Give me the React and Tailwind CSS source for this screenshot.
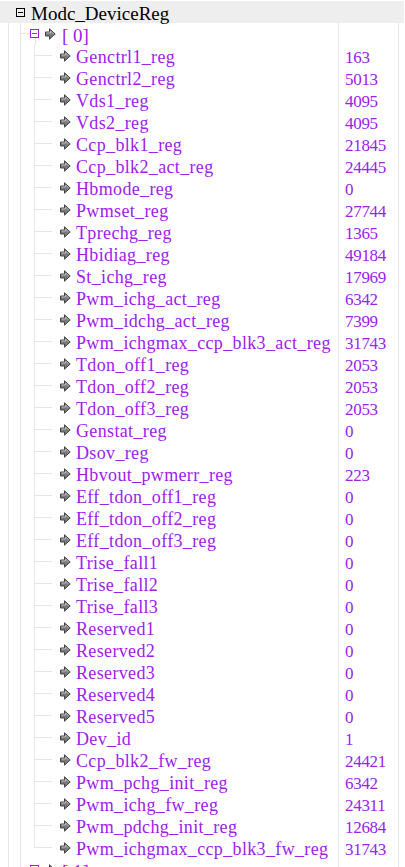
const rows = [
  ["Genctrl1_reg", "163"],
  ["Genctrl2_reg", "5013"],
  ["Vds1_reg", "4095"],
  ["Vds2_reg", "4095"],
  ["Ccp_blk1_reg", "21845"],
  ["Ccp_blk2_act_reg", "24445"],
  ["Hbmode_reg", "0"],
  ["Pwmset_reg", "27744"],
  ["Tprechg_reg", "1365"],
  ["Hbidiag_reg", "49184"],
  ["St_ichg_reg", "17969"],
  ["Pwm_ichg_act_reg", "6342"],
  ["Pwm_idchg_act_reg", "7399"],
  ["Pwm_ichgmax_ccp_blk3_act_reg", "31743"],
  ["Tdon_off1_reg", "2053"],
  ["Tdon_off2_reg", "2053"],
  ["Tdon_off3_reg", "2053"],
  ["Genstat_reg", "0"],
  ["Dsov_reg", "0"],
  ["Hbvout_pwmerr_reg", "223"],
  ["Eff_tdon_off1_reg", "0"],
  ["Eff_tdon_off2_reg", "0"],
  ["Eff_tdon_off3_reg", "0"],
  ["Trise_fall1", "0"],
  ["Trise_fall2", "0"],
  ["Trise_fall3", "0"],
  ["Reserved1", "0"],
  ["Reserved2", "0"],
  ["Reserved3", "0"],
  ["Reserved4", "0"],
  ["Reserved5", "0"],
  ["Dev_id", "1"],
  ["Ccp_blk2_fw_reg", "24421"],
  ["Pwm_pchg_init_reg", "6342"],
  ["Pwm_ichg_fw_reg", "24311"],
  ["Pwm_pdchg_init_reg", "12684"],
  ["Pwm_ichgmax_ccp_blk3_fw_reg", "31743"],
];

function Arrow() {
  return (
    <svg width="11" height="12" viewBox="0 0 11 12" className="shrink-0">
      <path d="M0.5 4 H4.5 V0.8 L10.2 6 L4.5 11.2 V8 H0.5 Z" fill="#7a7a7a" stroke="#444" strokeWidth="1" strokeLinejoin="miter" />
      <path d="M1.5 5 H5.5 V3 L8.5 6" fill="none" stroke="#bbb" strokeWidth="1" />
    </svg>
  );
}

function MinusBox({ color }) {
  return (
    <div className="w-[9px] h-[9px] border flex items-center justify-center shrink-0" style={{ borderColor: color }}>
      <div className="w-[5px] h-px" style={{ background: color }} />
    </div>
  );
}

const line = "border-l border-[#e6e6e6]";

function ValueCell({ children }) {
  return (
    <div className={`w-[60px] h-full ${line} pl-[6px] pt-[2px] flex items-center text-[17px] tracking-[-0.3px] text-[#a020f0]`}>
      {children}
    </div>
  );
}

function ChildRow({ name, value, last }) {
  return (
    <div className="flex h-[22px] items-stretch">
      <div className="w-[338px] flex items-stretch">
        <div className="w-[8px]" />
        <div className={`w-[12px] ${line}`} />
        <div className={`w-[14px] ${line}`} />
        <div className="w-[18px] flex flex-col">
          <div className={`h-[11px] ${line} border-b border-b-[#e6e6e6]`} />
          <div className={`flex-1 ${last ? "" : line}`} />
        </div>
        <div className="ml-[8px] flex items-center">
          <Arrow />
        </div>
        <div className="ml-[5px] pt-[2px] flex items-center text-[18px] tracking-[0.35px] text-[#a020f0] whitespace-nowrap">{name}</div>
      </div>
      <ValueCell>{value}</ValueCell>
      <div className={`w-[7px] ${line}`} />
    </div>
  );
}

function GroupRow({ label, expanded }) {
  return (
    <div className="flex h-[22px] items-stretch">
      <div className="w-[338px] flex items-stretch">
        <div className="w-[8px]" />
        <div className={`w-[12px] ${line}`} />
        <div className="w-[10px] flex flex-col">
          <div className={`h-[11px] ${line} border-b border-b-[#e6e6e6]`} />
          <div className={`flex-1 ${line}`} />
        </div>
        <div className="w-[9px] flex flex-col items-center">
          <div className="h-[6px]" />
          <MinusBox color="#a020f0" />
          {expanded && <div className={`flex-1 ml-[1px] ${line}`} />}
        </div>
        <div className="ml-[6px] flex items-center">
          <Arrow />
        </div>
        <div className="ml-[6px] pt-[2px] flex items-center text-[19px] text-[#a020f0] whitespace-nowrap">{label}</div>
      </div>
      <ValueCell />
      <div className={`w-[7px] ${line}`} />
    </div>
  );
}

export default function App() {
  return (
    <div className="w-[405px] h-[867px] overflow-hidden bg-white pt-px leading-none" style={{ fontFamily: '"Liberation Serif", serif' }}>
      <div className="h-[22px] w-[404px] bg-[#eeeeee] flex items-center">
        <div className="ml-[16px]">
          <MinusBox color="#000" />
        </div>
        <div className="ml-[6px] pt-[2px] text-[19px] text-black">Modc_DeviceReg</div>
      </div>
      <GroupRow label="[ 0]" expanded />
      {rows.map(([name, value], i) => (
        <ChildRow key={name} name={name} value={value} last={i === rows.length - 1} />
      ))}
      <GroupRow label="[ 1]" />
    </div>
  );
}
